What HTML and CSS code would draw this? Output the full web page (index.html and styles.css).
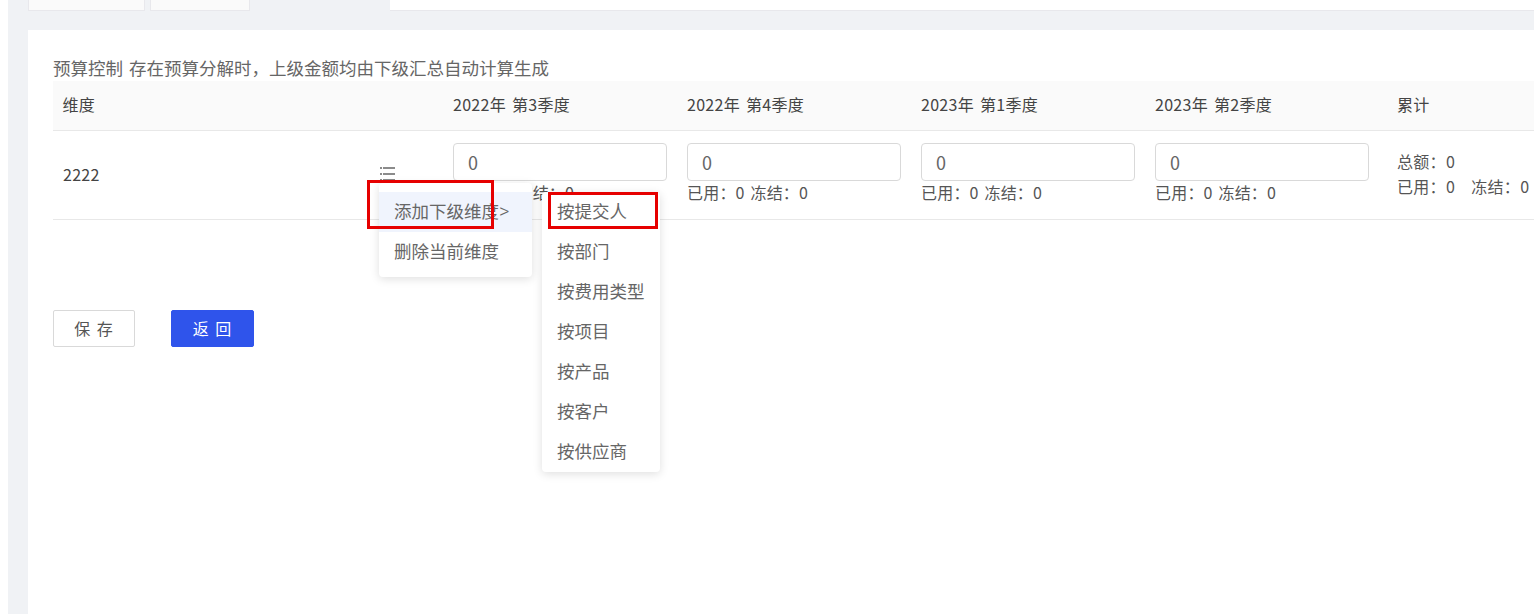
FILE: index.html
```html
<!DOCTYPE html>
<html lang="zh-CN">
<head>
<meta charset="utf-8">
<title>预算控制</title>
<link rel="stylesheet" href="styles.css">
</head>
<body>
<div class="shell">
  <div class="tabs">
    <div class="tab tab-a"></div>
    <div class="tab tab-b"></div>
    <div class="tab tab-active"></div>
    <div class="tab-rest"></div>
  </div>
  <main class="card">
    <div class="title">预算控制 存在预算分解时，上级金额均由下级汇总自动计算生成</div>
    <div class="table">
      <div class="row head">
        <div class="cell first">维度</div>
        <div class="cell">2022年 第3季度</div>
        <div class="cell">2022年 第4季度</div>
        <div class="cell">2023年 第1季度</div>
        <div class="cell">2023年 第2季度</div>
        <div class="cell total">累计</div>
      </div>
      <div class="row body">
        <div class="cell first dim">
          <span class="dim-name">2222</span>
          <svg class="list-icon" width="16" height="14" viewBox="0 0 16 14" aria-hidden="true">
            <path d="M1 1h2M4 1h12M1 7h2M4 7h12M1 13h2M4 13h12" fill="none" stroke="#666" stroke-width="1.4"/>
          </svg>
        </div>
        <div class="cell q"><div class="input">0</div><div class="used">已用：0 冻结：0</div></div>
        <div class="cell q"><div class="input">0</div><div class="used">已用：0 冻结：0</div></div>
        <div class="cell q"><div class="input">0</div><div class="used">已用：0 冻结：0</div></div>
        <div class="cell q"><div class="input">0</div><div class="used">已用：0 冻结：0</div></div>
        <div class="cell total sum"><div>总额：0</div><div>已用：0 &nbsp; 冻结：0</div></div>
      </div>
    </div>
    <div class="actions">
      <button class="btn" type="button">保 存</button>
      <button class="btn primary" type="button">返 回</button>
    </div>
  </main>

  <div class="menu menu-main">
    <div class="item hover">添加下级维度<span class="chev">&gt;</span></div>
    <div class="item">删除当前维度</div>
  </div>
  <div class="menu menu-sub">
    <div class="item">按提交人</div>
    <div class="item">按部门</div>
    <div class="item">按费用类型</div>
    <div class="item">按项目</div>
    <div class="item">按产品</div>
    <div class="item">按客户</div>
    <div class="item">按供应商</div>
  </div>
  <div class="mark mark-main"></div>
  <div class="mark mark-sub"></div>
</div>
</body>
</html>
```
FILE: styles.css
```css
* { box-sizing: border-box; }
html, body { margin: 0; height: 100%; overflow: hidden; background: #fff; }
body {
  padding-left: 8px;
  font-family: "Noto Sans CJK SC", "Noto Sans", sans-serif;
  color: #555;
}
.shell {
  position: relative;
  height: 614px;
  width: 1526px;
  background: #f0f2f5;
  display: flex;
  flex-direction: column;
  overflow: hidden;
}
.tabs {
  display: flex;
  height: 11px;
  padding-left: 20px;
}
.tab { height: 11px; border: 1px solid #e8e8ec; border-top: 0; background: #fafafa; }
.tab-a { width: 117px; margin-right: 5px; }
.tab-b { width: 100px; margin-right: 6px; }
.tab-active { width: 134px; background: #f0f2f5; border: 0; }
.tab-rest { flex: 1; background: #fff; border-bottom: 1px solid #e8e8ec; }
.card {
  margin: 19px 0 0 20px;
  flex: 1;
  background: #fff;
  padding: 25px 0 0 25px;
  min-width: 0;
}
.title { font-size: 17.5px; line-height: 26px; color: #666; white-space: nowrap; word-spacing: 2px; }
.table { width: 1500px; }
.row { display: grid; grid-template-columns: 390px 234px 234px 234px 243px 165px; }
.head { height: 50px; background: #fafafa; border-bottom: 1px solid #e8e8e8; font-size: 16px; color: #444; word-spacing: 2px; letter-spacing: .3px; }
.head .cell { display: flex; align-items: center; padding-bottom: 4px; }
.head .first { padding-left: 9.5px; }
.body { height: 89px; border-bottom: 1px solid #e8e8e8; font-size: 16px; }
.cell { padding-left: 10px; white-space: nowrap; }
.dim { display: flex; align-items: center; justify-content: space-between; padding-right: 48px; color: #444; }
.dim-name { margin-top: -2px; letter-spacing: .3px; }
.list-icon { margin-top: -2px; }
.q { padding-top: 12px; }
.input {
  width: 214px;
  height: 38px;
  border: 1px solid #d9d9d9;
  border-radius: 4px;
  padding-left: 14px;
  font-size: 18px;
  line-height: 36px;
  color: #666;
}
.used { font-size: 16px; line-height: 24px; margin-top: -1px; color: #555; word-spacing: 2px; letter-spacing: .2px; }
.total { padding-left: 9px; }
.sum { display: flex; flex-direction: column; justify-content: center; line-height: 25px; font-size: 16px; padding-bottom: 2px; letter-spacing: .3px; word-spacing: 1.5px; }
.actions { display: flex; gap: 36px; margin-top: 90px; }
.btn {
  width: 82px;
  height: 37px;
  border: 1px solid #d9d9d9;
  border-radius: 2px;
  background: #fff;
  color: #555;
  font: 16px "Noto Sans CJK SC", sans-serif;
  letter-spacing: 1px;
  word-spacing: 1px;
  padding: 0 0 2px;
}
.primary { width: 83px; background: #2f54eb; border-color: #2f54eb; color: #fff; }
.menu {
  position: absolute;
  background: #fff;
  border-radius: 4px;
  box-shadow: 0 2px 10px rgba(0, 0, 0, .13);
  font-size: 17.5px;
  color: #666;
  white-space: nowrap;
}
.item { height: 40px; line-height: 38px; padding-left: 15px; }
.hover { background: #f0f4fd; }
.chev { font-family: Roboto, sans-serif; font-weight: 300; font-size: 20px; line-height: 1; color: #666; }
.menu-main { left: 371px; top: 183px; width: 153px; height: 94px; padding-top: 9px; }
.menu-sub { left: 534px; top: 192px; width: 118px; height: 280px; }
.mark { position: absolute; border: 3px solid #e60000; }
.mark-main { left: 359px; top: 180px; width: 127px; height: 49px; }
.mark-sub { left: 540px; top: 192px; width: 110px; height: 37px; }
```
